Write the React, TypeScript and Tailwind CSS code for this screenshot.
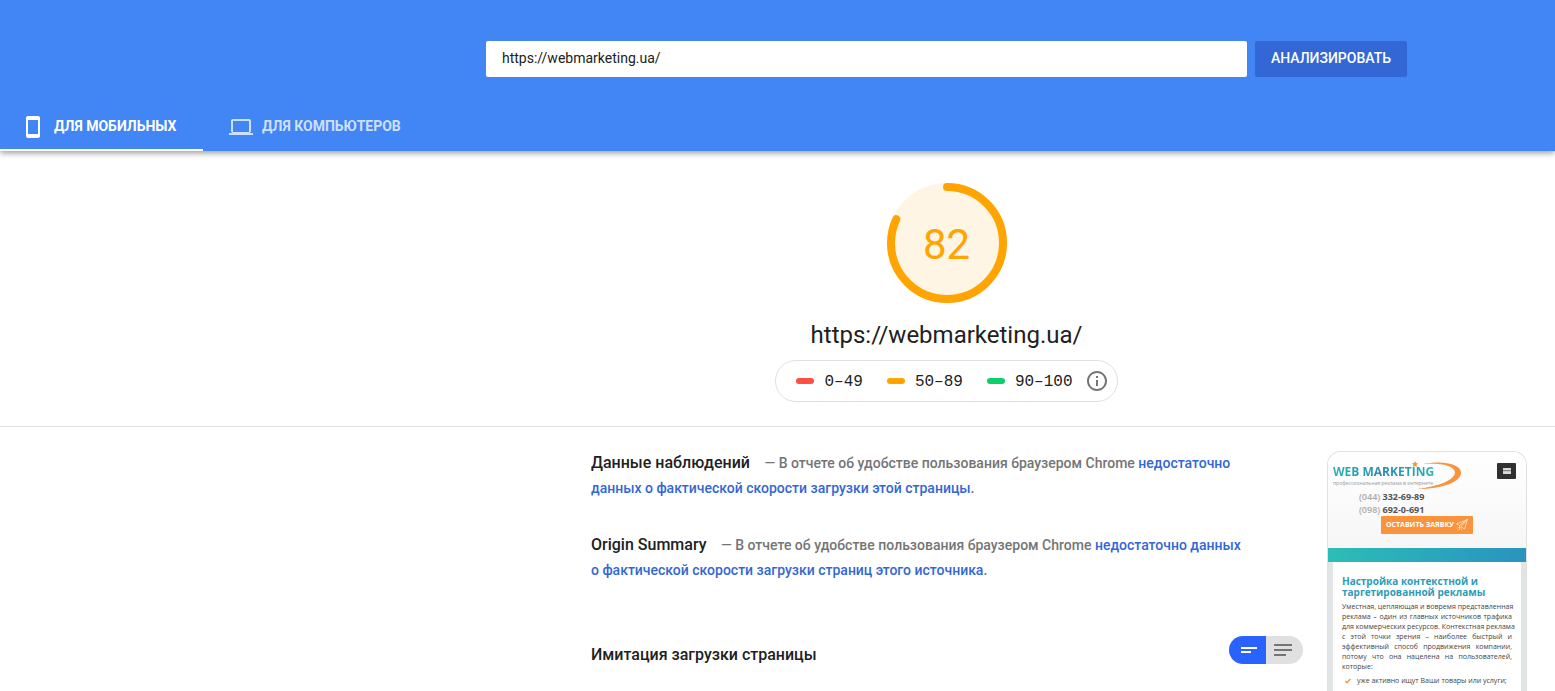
import React from "react";

const legend = [
  { range: "0–49", color: "bg-[#ff4e42]" },
  { range: "50–89", color: "bg-[#ffa400]" },
  { range: "90–100", color: "bg-[#0cce6b]" },
];

const summaries = [
  {
    title: "Данные наблюдений",
    link: "недостаточно данных о фактической скорости загрузки этой страницы",
  },
  {
    title: "Origin Summary",
    link: "недостаточно данных о фактической скорости загрузки страниц этого источника",
  },
];

const phones = [
  { code: "(044)", number: "332-69-89" },
  { code: "(098)", number: "692-0-691" },
];

const previewLines = [
  "Уместная, цепляющая и вовремя представленная",
  "реклама – один из главных источников трафика",
  "для коммерческих ресурсов. Контекстная реклама",
  "с этой точки зрения – наиболее быстрый и",
  "эффективный способ продвижения компании,",
  "потому что она нацелена на пользователей,",
];

const PhoneIcon = () => (
  <svg viewBox="0 0 24 24" className="mt-0.5 h-6 w-6 shrink-0" fill="currentColor" aria-hidden="true">
    <path d="M17 1H7c-1.100 0-2 .9-2 2v18c0 1.100.9 2 2 2h10c1.100 0 2-.9 2-2V3c0-1.100-.9-2-2-2zm0 18H7V5h10v14z" />
  </svg>
);

const LaptopIcon = () => (
  <svg viewBox="0 0 24 24" className="mt-0.5 h-6 w-6 shrink-0" fill="currentColor" aria-hidden="true">
    <path d="M20 18c1.100 0 2-.9 2-2V6c0-1.100-.9-2-2-2H4c-1.100 0-2 .9-2 2v10c0 1.100.9 2 2 2H0v2h24v-2h-4zM4 6h16v11H4V6z" />
  </svg>
);

const InfoIcon = () => (
  <svg viewBox="0 0 24 24" className="h-6 w-6" fill="currentColor" aria-hidden="true">
    <path d="M11 17h2v-6h-2v6zm1-15C6.480 2 2 6.480 2 12s4.480 10 10 10 10-4.480 10-10S17.520 2 12 2zm0 18c-4.410 0-8-3.590-8-8s3.590-8 8-8 8 3.590 8 8-3.590 8-8 8zM11 9h2V7h-2v2z" />
  </svg>
);

const Header = () => (
  <header className="relative bg-[#4285f4] pt-[41px] shadow-[0_2px_6px_rgba(0,0,0,0.4)]">
    <form className="flex gap-2 pl-[486px] pr-[148px]" onSubmit={(e) => e.preventDefault()}>
      <input
        type="text"
        aria-label="URL"
        defaultValue="https://webmarketing.ua/"
        className="h-9 min-w-0 flex-1 rounded-xs bg-white px-4 pb-0.5 text-sm text-[#212121] outline-none"
      />
      <button className="h-9 w-[152px] rounded-xs bg-[#3367d6] pb-0.5 text-sm font-medium text-white">
        АНАЛИЗИРОВАТЬ
      </button>
    </form>
    <nav className="mt-[26px] flex text-sm font-bold">
      <button className="flex h-12 w-[203px] items-center gap-[9px] border-b-2 border-white pl-[21px] text-white">
        <PhoneIcon />
        ДЛЯ МОБИЛЬНЫХ
      </button>
      <button className="flex h-12 items-center gap-[9px] border-b-2 border-transparent px-[26px] text-white/75">
        <LaptopIcon />
        ДЛЯ КОМПЬЮТЕРОВ
      </button>
    </nav>
  </header>
);

const Gauge = ({ score }: { score: number }) => (
  <div className="relative h-[120px] w-[120px]">
    <svg viewBox="0 0 120 120" className="h-full w-full" aria-hidden="true">
      <circle cx="60" cy="60" r="60" fill="#fff5e5" />
      <circle
        cx="60"
        cy="60"
        r="56"
        fill="none"
        stroke="#ffa400"
        strokeWidth="8"
        strokeLinecap="round"
        pathLength="100"
        strokeDasharray={`${score} 100`}
        transform="rotate(-90 60 60)"
      />
    </svg>
    <span className="absolute inset-0 flex items-center justify-center pt-0.5 text-[42px] text-[#ffa400]">
      {score}
    </span>
  </div>
);

const ScoreSection = () => (
  <section className="flex flex-col items-center border-b border-[#e0e0e0] pb-6 pl-[486px] pr-[148px] pt-8">
    <Gauge score={82} />
    <h1 className="mt-4 text-2xl text-[#212121]">https://webmarketing.ua/</h1>
    <div className="mt-[9px] flex h-[42px] items-center rounded-full border border-[#e0e0e0] pl-5 pr-2">
      <ul className="flex gap-6 pr-3">
        {legend.map((item) => (
          <li key={item.range} className="flex items-center gap-2.5">
            <span className={`h-1.5 w-[18px] rounded-full ${item.color}`} />
            <span className="pt-0.5 font-['Liberation_Mono',monospace] text-base text-[#212121]">
              {item.range}
            </span>
          </li>
        ))}
      </ul>
      <button aria-label="Info" className="text-[#757575]">
        <InfoIcon />
      </button>
    </div>
  </section>
);

const ViewToggle = () => (
  <div className="flex h-7 w-[74px] overflow-hidden rounded-full">
    <button aria-label="Compact" className="flex w-1/2 flex-col justify-center gap-0.5 bg-[#2962ff] pl-3">
      <span className="h-0.5 w-4 bg-white" />
      <span className="h-0.5 w-2.5 bg-white" />
    </button>
    <button aria-label="Detailed" className="flex w-1/2 flex-col justify-center gap-[3px] bg-[#e0e0e0] pl-2">
      <span className="h-0.5 w-[18px] bg-[#757575]" />
      <span className="h-0.5 w-[18px] bg-[#757575]" />
      <span className="h-0.5 w-3 bg-[#757575]" />
    </button>
  </div>
);

const SitePreview = () => (
  <aside className="flex w-[200px] shrink-0 flex-col overflow-hidden rounded-t-[14px] border border-b-0 border-[#e0e0e0] font-['Open_Sans',sans-serif]">
    <div className="h-24 bg-linear-to-b from-white to-[#f6f6f6] px-[5px]">
      <div className="flex items-start justify-between pr-[5px] pt-[11px]">
        <div className="relative">
          <p className="bg-linear-to-r from-[#2ab4b4] via-[#2488b5] to-[#27b3b3] bg-clip-text text-[12px] font-bold leading-[18px] text-transparent">
            WEB MARKETING
          </p>
          <p className="text-[5px] leading-[4px] text-[#999]">профессиональная реклама в интернете</p>
          <svg viewBox="0 0 60 30" className="absolute left-[76px] top-[-2px] h-[30px] w-[60px]" aria-hidden="true">
            <path
              d="M14 3C34 -1 51 3 52 11C53 20 35 28 8 28C31 25 46 19 46 11C44 4 32 2 14 3z"
              fill="#fb923c"
            />
            <path d="M6 0l1 2 2 .3-1.500 1.500.4 2.200L6 5 4 6l.4-2.200L3 2.300 5 2z" fill="#fb923c" />
          </svg>
        </div>
        <button aria-label="Menu" className="flex h-4 w-[19px] items-center justify-center rounded-[1px] bg-[#303030]">
          <svg viewBox="0 0 8 6" className="h-1.5 w-2" aria-hidden="true">
            <path d="M0 0h8v6H0z" fill="#d8d8d8" />
            <path d="M0 2.700h8" stroke="#777" strokeWidth="1" />
          </svg>
        </button>
      </div>
      <div className="pl-[26px] pt-[5px] text-[9px] font-bold leading-[13px] text-[#555]">
        {phones.map((phone) => (
          <p key={phone.code}>
            <span className="font-semibold text-[#aaa]">{phone.code}</span> {phone.number}
          </p>
        ))}
      </div>
      <button className="ml-12 flex h-[18px] w-[92px] items-center justify-between rounded-[1px] bg-[#fb923c] px-[5px] text-[7px] font-bold text-white">
        <span>ОСТАВИТЬ ЗАЯВКУ</span>
        <svg viewBox="0 0 12 12" className="h-3 w-3" fill="none" stroke="white" strokeWidth=".6" aria-hidden="true">
          <path d="M11.500.5L.5 5l3 1.500L11.500.5 5 7.500l3.500 2.500zM3.500 6.500v3L5 7.500M1 9.500l1.500-1.500M2 11.500l2-2M5 11l1.500-1.500" />
        </svg>
      </button>
    </div>
    <div className="h-3.5 shrink-0 bg-linear-to-r from-[#2dbdb6] to-[#2a93bf]" />
    <div className="flex-1 border-x-[5px] border-[#e1e5e6] bg-white px-[9px] pt-3.5 text-[#444]">
      <h2 className="text-[10px] font-bold leading-[11px] text-[#2b9db8]">
        Настройка контекстной и таргетированной рекламы
      </h2>
      <div className="mt-1 text-[7px] leading-[10px]">
        {previewLines.map((line) => (
          <p key={line} className="whitespace-nowrap [text-align-last:justify]">
            {line}
          </p>
        ))}
        <p>которые:</p>
        <p className="mt-1 flex items-center gap-1.5 whitespace-nowrap pl-[3px]">
          <svg viewBox="0 0 6 6" className="h-1.5 w-1.5" fill="none" stroke="#fb923c" strokeWidth="1.500" aria-hidden="true">
            <path d="M.5 3L2 4.700 5.500 1" />
          </svg>
          уже активно ищут Ваши товары или услуги;
        </p>
      </div>
    </div>
  </aside>
);

const App = () => (
  <div className="flex min-h-screen flex-col bg-white font-[Roboto,sans-serif]">
    <Header />
    <ScoreSection />
    <main className="flex flex-1 items-stretch gap-6 pl-[591px] pr-7 pt-6">
      <div className="min-w-0 flex-1">
        {summaries.map((item) => (
          <p key={item.title} className="mb-8 pr-14 text-sm font-medium leading-[25px] text-[#757575]">
            <strong className="mr-[11px] text-base font-medium leading-none text-[#212121]">{item.title}</strong>
            {" — В отчете об удобстве пользования браузером Chrome "}
            <a href="#" className="text-[#3367d6]">
              {item.link}
            </a>
            .
          </p>
        ))}
        <div className="mt-[53px] flex items-start justify-between">
          <h2 className="pt-[7px] text-base font-medium text-[#212121]">Имитация загрузки страницы</h2>
          <ViewToggle />
        </div>
      </div>
      <SitePreview />
    </main>
  </div>
);

export default App;
